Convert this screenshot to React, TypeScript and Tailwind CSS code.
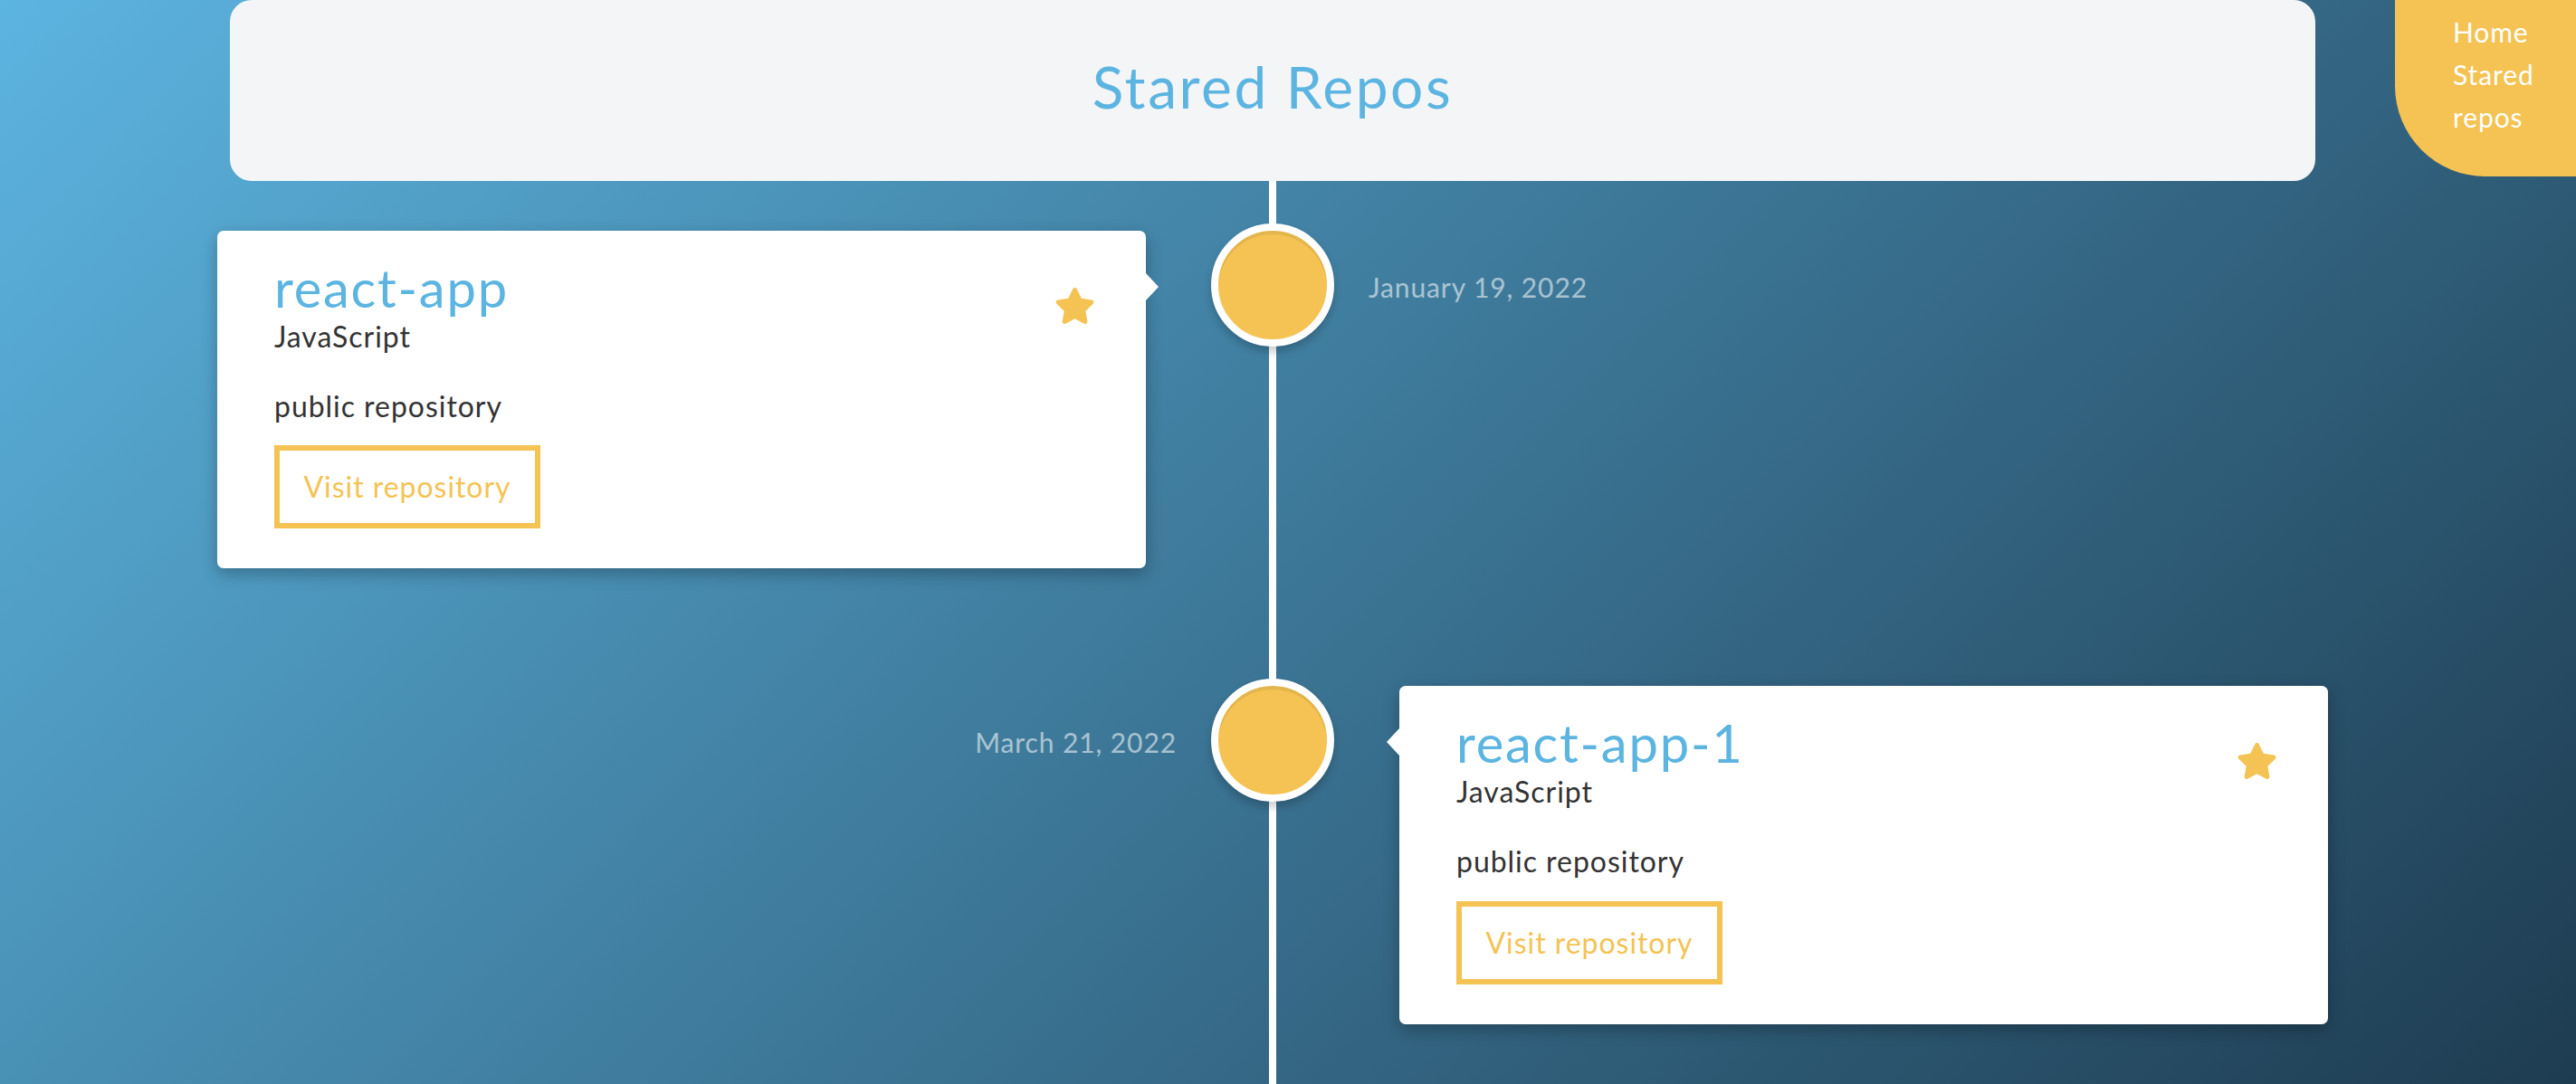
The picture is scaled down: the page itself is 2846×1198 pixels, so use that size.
import { FaStar } from "react-icons/fa";

interface Repo {
  name: string;
  language: string;
  visibility: string;
  date: string;
  url: string;
}

const repos: Repo[] = [
  {
    name: "react-app",
    language: "JavaScript",
    visibility: "public repository",
    date: "January 19, 2022",
    url: "#",
  },
  {
    name: "react-app-1",
    language: "JavaScript",
    visibility: "public repository",
    date: "March 21, 2022",
    url: "#",
  },
];

function RepoCard({ repo, side }: { repo: Repo; side: "left" | "right" }) {
  return (
    <div className="relative mt-[8px] rounded-[7px] bg-white pl-[63px] pr-[56px] pt-[28px] pb-[44px] shadow-[0_6px_18px_rgba(0,0,0,0.28)]">
      {/* Pointer */}
      {side === "left" ? (
        <span className="absolute right-[-14px] top-[47px] h-0 w-0 border-y-[15px] border-l-[14px] border-y-transparent border-l-white" />
      ) : (
        <span className="absolute left-[-14px] top-[47px] h-0 w-0 border-y-[15px] border-r-[14px] border-y-transparent border-r-white" />
      )}

      <FaStar className="absolute right-[56px] top-[63px] h-[40px] w-[45px] text-[#f4c353]" />

      <h2 className="text-[58px] leading-[1.2] tracking-[0.03em] text-[#5cb5e1]">
        {repo.name}
      </h2>
      <p className="text-[32px] leading-[1.2] tracking-[0.03em] text-[#333333]">
        {repo.language}
      </p>
      <p className="mt-[39px] text-[32px] leading-[1.2] tracking-[0.03em] text-[#333333]">
        {repo.visibility}
      </p>
      <a
        href={repo.url}
        className="mt-[24px] flex h-[92px] w-[294px] items-center justify-center border-[6px] border-[#f4c353] text-[32px] leading-[1.2] tracking-[0.03em] text-[#f4c353]"
      >
        Visit repository
      </a>
    </div>
  );
}

function Dot() {
  return (
    <div className="h-[136px] w-[136px] rounded-full border-[8px] border-white bg-[#f4c353] shadow-[inset_0_4px_0_rgba(0,0,0,0.07),0_6px_10px_rgba(0,0,0,0.2)]" />
  );
}

function DateLabel({ date, align }: { date: string; align: "left" | "right" }) {
  return (
    <div
      className={
        align === "left"
          ? "-ml-[34px] flex h-[136px] items-center justify-start pt-[4px]"
          : "-mr-[34px] flex h-[136px] items-center justify-end pt-[4px]"
      }
    >
      <span className="text-[30px] tracking-[0.03em] text-white/55">{date}</span>
    </div>
  );
}

export default function App() {
  return (
    <div className="relative flex min-h-screen flex-col overflow-hidden bg-[linear-gradient(135deg,#5cb4e0,#1e3c51)] font-['Lato','Open_Sans',sans-serif]">
      {/* Nav */}
      <nav className="absolute right-0 top-0 z-20 w-[200px] rounded-bl-[100px] bg-[#f4c353] pb-[42px] pl-[64px] pt-[12px]">
        <ul className="text-[30px] leading-[47px] tracking-[0.03em] text-white">
          <li>
            <a href="#">Home</a>
          </li>
          <li>
            <a href="#">Stared repos</a>
          </li>
        </ul>
      </nav>

      <div className="ml-[240px] flex w-[2332px] flex-1 flex-col">
        {/* Header */}
        <header className="relative z-10 mx-[14px] flex h-[200px] items-center justify-center rounded-[24px] bg-[#f4f5f7] pb-[8px]">
          <h1 className="text-[64px] leading-[1.2] tracking-[0.04em] text-[#5cb5e1]">
            Stared Repos
          </h1>
        </header>

        {/* Timeline */}
        <div className="relative flex-1 pt-[47px] pb-[40px]">
          <div className="absolute bottom-0 left-1/2 top-[-20px] w-[8px] -translate-x-1/2 bg-white" />
          <div className="relative flex flex-col gap-[122px]">
            {repos.map((repo, i) => (
              <div
                key={repo.name}
                className="grid grid-cols-[1fr_136px_1fr] items-start gap-x-[72px]"
              >
                {i % 2 === 0 ? (
                  <>
                    <RepoCard repo={repo} side="left" />
                    <Dot />
                    <DateLabel date={repo.date} align="left" />
                  </>
                ) : (
                  <>
                    <DateLabel date={repo.date} align="right" />
                    <Dot />
                    <RepoCard repo={repo} side="right" />
                  </>
                )}
              </div>
            ))}
          </div>
        </div>
      </div>
    </div>
  );
}
